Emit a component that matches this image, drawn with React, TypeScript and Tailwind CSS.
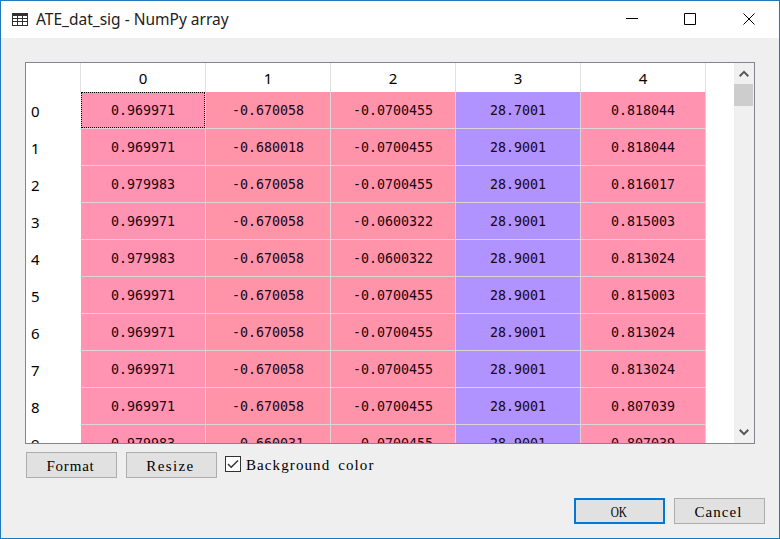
const rows: string[][] = [
  ["0.969971", "-0.670058", "-0.0700455", "28.7001", "0.818044"],
  ["0.969971", "-0.680018", "-0.0700455", "28.9001", "0.818044"],
  ["0.979983", "-0.670058", "-0.0700455", "28.9001", "0.816017"],
  ["0.969971", "-0.670058", "-0.0600322", "28.9001", "0.815003"],
  ["0.979983", "-0.670058", "-0.0600322", "28.9001", "0.813024"],
  ["0.969971", "-0.670058", "-0.0700455", "28.9001", "0.815003"],
  ["0.969971", "-0.670058", "-0.0700455", "28.9001", "0.813024"],
  ["0.969971", "-0.670058", "-0.0700455", "28.9001", "0.813024"],
  ["0.969971", "-0.670058", "-0.0700455", "28.9001", "0.807039"],
  ["0.979983", "-0.660031", "-0.0700455", "28.9001", "0.807039"],
];

const columnColors = ["bg-[#ff93b1]", "bg-[#ff93a8]", "bg-[#ff93aa]", "bg-[#b093ff]", "bg-[#ff93b0]"];

const ui = "font-['Noto_Sans','Open_Sans',sans-serif]";
const song = "font-['Liberation_Serif',serif] text-[15px] text-black";

function TitleBar() {
  return (
    <div className="flex h-[37px] shrink-0 items-center bg-white pl-[11px]">
      <svg width="16" height="13" viewBox="0 0 16 13" className="mb-px" shapeRendering="crispEdges">
        <rect width="16" height="13" rx="1" fill="#303030" />
        {[3, 6, 9].map((y) =>
          [1, 6, 11].map((x) => (
            <rect key={`${x}-${y}`} x={x} y={y} width="4" height={y === 9 ? 3 : 2} fill="#fff" />
          ))
        )}
      </svg>
      <span className={`${ui} mb-px ml-2 text-[15.5px] leading-5 text-[#222]`}>ATE_dat_sig - NumPy array</span>
      <svg width="132" height="14" viewBox="0 0 132 14" className="mr-[22px] mb-px ml-auto" fill="none" stroke="#000">
        <path d="M1 6.5H13M59.5 1.5H70.5V12.5H59.5ZM118.5 1.5L129.5 12.5M129.5 1.5L118.5 12.5" />
      </svg>
    </div>
  );
}

function Table() {
  return (
    <div className="flex h-[382px] w-[730px] overflow-hidden border border-[#82858b] bg-white">
      <div className="h-full w-[680px] shrink-0 overflow-hidden">
        <div className={`${ui} flex h-[29px] text-[15px] text-black`}>
          <div className="w-[55px] border-r border-[#e0e0e0]" />
          {columnColors.map((_, i) => (
            <div key={i} className="flex w-[125px] items-center justify-center border-r border-[#e0e0e0] pt-[2px]">
              {i}
            </div>
          ))}
        </div>
        {rows.map((row, r) => (
          <div key={r} className="flex h-[37px]">
            <div className={`${ui} flex w-[55px] items-center pt-[2px] pl-[5px] text-[15px] text-black`}>{r}</div>
            {row.map((value, c) => (
              <div
                key={c}
                className={`flex w-[125px] border-r border-b border-[#dcd4d8] ${columnColors[c]}`}
              >
                <div
                  className={`flex w-full items-center justify-center border pt-[2px] font-['DejaVu_Sans_Mono',monospace] text-[13.3px] text-[#200510] ${
                    r === 0 && c === 0 ? "border-dotted border-black" : "border-transparent"
                  }`}
                >
                  {value}
                </div>
              </div>
            ))}
          </div>
        ))}
      </div>
      <div className="ml-auto flex w-5 flex-col bg-[#f0f0f0] pr-px">
        <div className="flex h-[21px] items-center justify-center">
          <svg width="10" height="8" viewBox="0 0 10 8" fill="none" stroke="#555" strokeWidth="2">
            <path d="M.7 6.2L5 1.9L9.3 6.2" />
          </svg>
        </div>
        <div className="h-[22px] bg-[#cdcdcd]" />
        <div className="mt-auto flex h-[22px] items-center justify-center">
          <svg width="10" height="8" viewBox="0 0 10 8" fill="none" stroke="#555" strokeWidth="2">
            <path d="M.7 1.8L5 6.1L9.3 1.8" />
          </svg>
        </div>
      </div>
    </div>
  );
}

function Button({ label, primary = false, spacing }: { label: string; primary?: boolean; spacing: string }) {
  return (
    <button
      className={`${song} flex h-[26px] w-[91px] items-center justify-center bg-[#e1e1e1] pt-[2px] pr-[2px] ${
        primary ? "border-2 border-[#0078d7]" : "border border-[#adadad]"
      }`}
    >
      <span className={spacing}>{label}</span>
    </button>
  );
}

export default function App() {
  return (
    <div className="flex h-[539px] w-[780px] flex-col overflow-hidden border border-[#2079bd] bg-[#efefef]">
      <TitleBar />
      <div className="flex flex-col pt-6 pl-6">
        <Table />
        <div className="mt-2 ml-px flex gap-[9px]">
          <Button label="Format" spacing="tracking-[0.8px]" />
          <Button label="Resize" spacing="tracking-[1.4px]" />
          <label className="-ml-px flex h-6 items-center">
            <span className="flex size-4 items-center justify-center border border-[#333] bg-white">
              <svg width="12" height="10" viewBox="0 0 12 10" fill="none" stroke="#333" strokeWidth="1.4">
                <path d="M1 5L4.2 8.2L11 1.4" />
              </svg>
            </span>
            <span className={`${song} ml-[5px] pt-[3px] tracking-[1.1px] [word-spacing:3px]`}>Background color</span>
          </label>
        </div>
        <div className="mt-5 mr-[14px] flex justify-end gap-[9px]">
          <Button label="OK" primary spacing="inline-block scale-x-75" />
          <Button label="Cancel" spacing="tracking-[1.1px]" />
        </div>
      </div>
    </div>
  );
}
